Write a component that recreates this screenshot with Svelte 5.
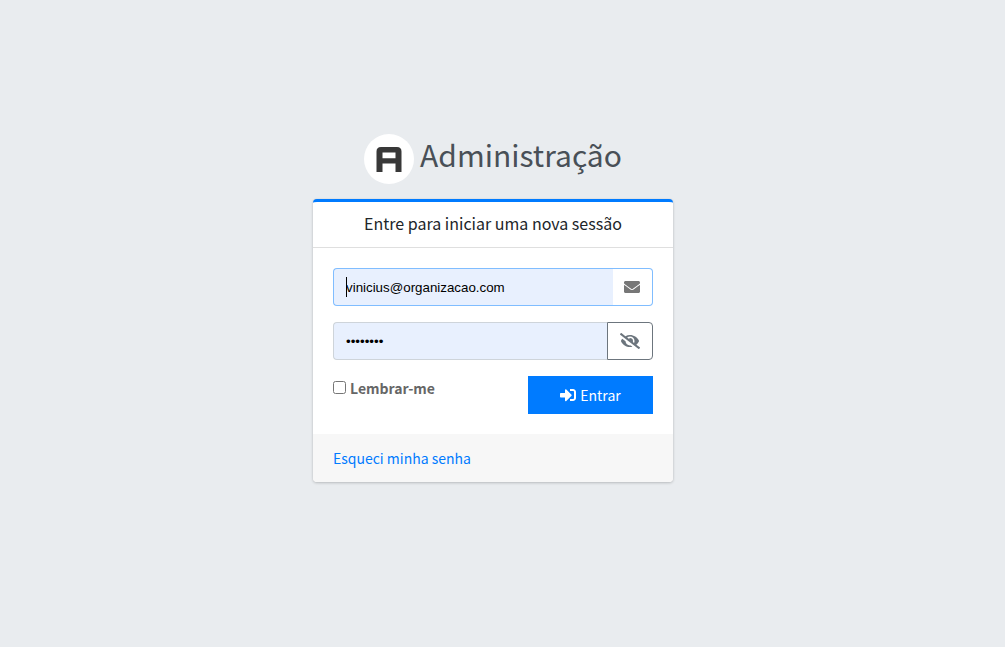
<script>
  let email = $state('vinicius@organizacao.com');
  let password = $state('segredo1');
  let visible = $state(false);
  let remember = $state(false);
</script>

<main class="page">
  <div class="box">
    <h1 class="logo">
      <svg viewBox="0 0 50 50" aria-hidden="true">
        <circle cx="25" cy="25" r="25" fill="#fff" />
        <path fill="#383838" fill-rule="evenodd" d="M12.500 38V17.500Q12.500 13 17 13H33Q37.500 13 37.500 17.500V38H31.500V29.500H18.500V38ZM18.500 24.300H31.500V18.500H18.500Z" />
      </svg>
      <span>Administração</span>
    </h1>

    <section class="card">
      <header><h2>Entre para iniciar uma nova sessão</h2></header>
      <form onsubmit={(e) => e.preventDefault()}>
        <div class="group focused">
          <input type="email" aria-label="E-mail" bind:value={email} />
          <span class="caret" aria-hidden="true"></span>
          <span class="addon">
            <svg class="envelope" viewBox="0 0 512 512" aria-hidden="true"><path d="M502.3 190.8c3.9-3.1 9.7-.2 9.7 4.7V400c0 26.5-21.5 48-48 48H48c-26.5 0-48-21.5-48-48V195.600c0-5 5.700-7.800 9.700-4.700 22.400 17.400 52.100 39.500 154.100 113.600 21.100 15.400 56.700 47.800 92.200 47.600 35.700.3 72-32.800 92.300-47.600 102-74.100 131.600-96.300 154-113.700zM256 320c23.200.4 56.600-29.200 73.400-41.400 132.700-96.300 142.800-104.700 173.400-128.700 5.800-4.500 9.200-11.500 9.200-18.900v-19c0-26.500-21.500-48-48-48H48c-26.500 0-48 21.500-48 48v19c0 7.400 3.400 14.300 9.200 18.900 30.600 23.900 40.700 32.400 173.400 128.700 16.800 12.200 50.200 41.800 73.400 41.400z" /></svg>
          </span>
        </div>
        <div class="group">
          <input type={visible ? 'text' : 'password'} aria-label="Senha" bind:value={password} />
          <button class="toggle" type="button" aria-label="Mostrar senha" onclick={() => (visible = !visible)}>
            <svg class="eye" viewBox="0 0 640 512" aria-hidden="true"><path d="M320 400c-75.850 0-137.250-58.710-142.900-133.110L72.200 185.820c-13.790 17.300-26.480 35.590-36.720 55.590a32.350 32.350 0 0 0 0 29.190C89.710 376.410 197.070 448 320 448c26.910 0 52.870-4 77.890-10.460L346 397.390a144.130 144.130 0 0 1-26 2.610zm313.820 58.100l-110.550-85.440a331.250 331.250 0 0 0 81.250-102.070 32.350 32.350 0 0 0 0-29.190C550.290 135.590 442.930 64 320 64a308.150 308.150 0 0 0-147.320 37.700L45.460 3.370A16 16 0 0 0 23 6.180L3.370 31.450A16 16 0 0 0 6.180 53.900l588.360 454.730a16 16 0 0 0 22.460-2.810l19.640-25.270a16 16 0 0 0-2.820-22.450zm-183.720-142l-39.300-30.380A94.750 94.750 0 0 0 416 256a94.760 94.760 0 0 0-121.310-92.210A47.650 47.650 0 0 1 304 192a46.640 46.640 0 0 1-1.540 10l-73.610-56.890A142.310 142.310 0 0 1 320 112a143.920 143.920 0 0 1 144 144c0 21.630-5.290 41.790-13.900 60.110z" /></svg>
          </button>
        </div>
        <div class="actions">
          <label><input type="checkbox" bind:checked={remember} /><span>Lembrar-me</span></label>
          <button class="submit" type="submit">
            <svg viewBox="0 0 512 512" aria-hidden="true"><path d="M416 448h-84c-6.600 0-12-5.400-12-12v-40c0-6.600 5.400-12 12-12h84c17.700 0 32-14.300 32-32V160c0-17.700-14.300-32-32-32h-84c-6.600 0-12-5.400-12-12V76c0-6.600 5.400-12 12-12h84c53 0 96 43 96 96v192c0 53-43 96-96 96zm-47-201L201 79c-15-15-41-4.500-41 17v96H24c-13.300 0-24 10.700-24 24v96c0 13.300 10.700 24 24 24h136v96c0 21.500 26 32 41 17l168-168c9.300-9.400 9.300-24.600 0-34z" /></svg>
            <span>Entrar</span>
          </button>
        </div>
      </form>
      <footer><a href="#senha">Esqueci minha senha</a></footer>
    </section>
  </div>
</main>

<style>
  :global(body) {
    margin: 0;
    background: #e9ecef;
  }
  .page,
  .page * {
    box-sizing: border-box;
  }
  .page {
    min-height: 100vh;
    display: flex;
    align-items: center;
    justify-content: center;
    padding: 0 19px 32px 0;
    color: #212529;
    font: 14px/24px 'Source Sans Pro', 'Noto Sans CJK JP', sans-serif;
  }
  .box {
    width: 100%;
    max-width: 360px;
  }
  .logo {
    display: flex;
    align-items: flex-start;
    justify-content: center;
    gap: 6px;
    margin: 0 0 15px;
    color: #495057;
    font-size: 30px;
    font-weight: 400;
    line-height: 40px;
  }
  .logo svg {
    width: 50px;
    height: 50px;
  }
  .card {
    overflow: hidden;
    background: #fff;
    border-top: 3px solid #007bff;
    border-radius: 4px;
    box-shadow: 0 0 1px rgba(0, 0, 0, 0.13), 0 1px 3px rgba(0, 0, 0, 0.2);
  }
  header {
    padding: 11px 20px 13px;
    border-bottom: 1px solid rgba(0, 0, 0, 0.125);
    text-align: center;
  }
  h2 {
    margin: 0;
    font-size: 16px;
    font-weight: 400;
    line-height: 21px;
  }
  form {
    padding: 20px;
  }
  .group {
    position: relative;
    display: flex;
    height: 38px;
    margin-bottom: 16px;
  }
  .group input {
    flex: 1;
    min-width: 0;
    padding: 8px 12px 6px;
    border: 1px solid #ced4da;
    border-right: 0;
    border-radius: 4px 0 0 4px;
    background: #e8f0fe;
    color: #000;
    font-family: 'Liberation Sans', Arial, sans-serif;
    outline: 0;
  }
  .addon,
  .toggle {
    display: flex;
    align-items: center;
    justify-content: center;
    border: 1px solid #ced4da;
    border-radius: 0 4px 4px 0;
    background: #fff;
  }
  .addon {
    width: 40px;
    padding: 0 2px 0 0;
    border-left: 0;
    color: #777;
  }
  .toggle {
    width: 46px;
    padding: 0;
    border-color: #6c757d;
    color: #6c757d;
    cursor: pointer;
  }
  .focused input,
  .focused .addon {
    border-color: #80bdff;
  }
  .caret {
    position: absolute;
    left: 13px;
    top: 9px;
    width: 1px;
    height: 20px;
    background: #000;
  }
  svg {
    display: block;
    fill: currentColor;
  }
  .envelope,
  .submit svg {
    width: 16px;
    height: 16px;
  }
  .eye {
    width: 20px;
    height: 16px;
  }
  .actions {
    display: flex;
    align-items: flex-start;
    justify-content: space-between;
  }
  label {
    display: flex;
    align-items: flex-start;
    gap: 4px;
    color: #666;
    font-weight: 700;
  }
  label input {
    width: 13px;
    height: 13px;
    margin: 5px 0 0;
  }
  .submit {
    display: flex;
    align-items: center;
    justify-content: center;
    gap: 4px;
    width: 125px;
    height: 38px;
    padding: 0;
    border: 0;
    background: #007bff;
    color: #fff;
    font: inherit;
    cursor: pointer;
  }
  footer {
    padding: 12px 20px;
    background: #f7f7f7;
  }
  a {
    color: #007bff;
    text-decoration: none;
  }
</style>
